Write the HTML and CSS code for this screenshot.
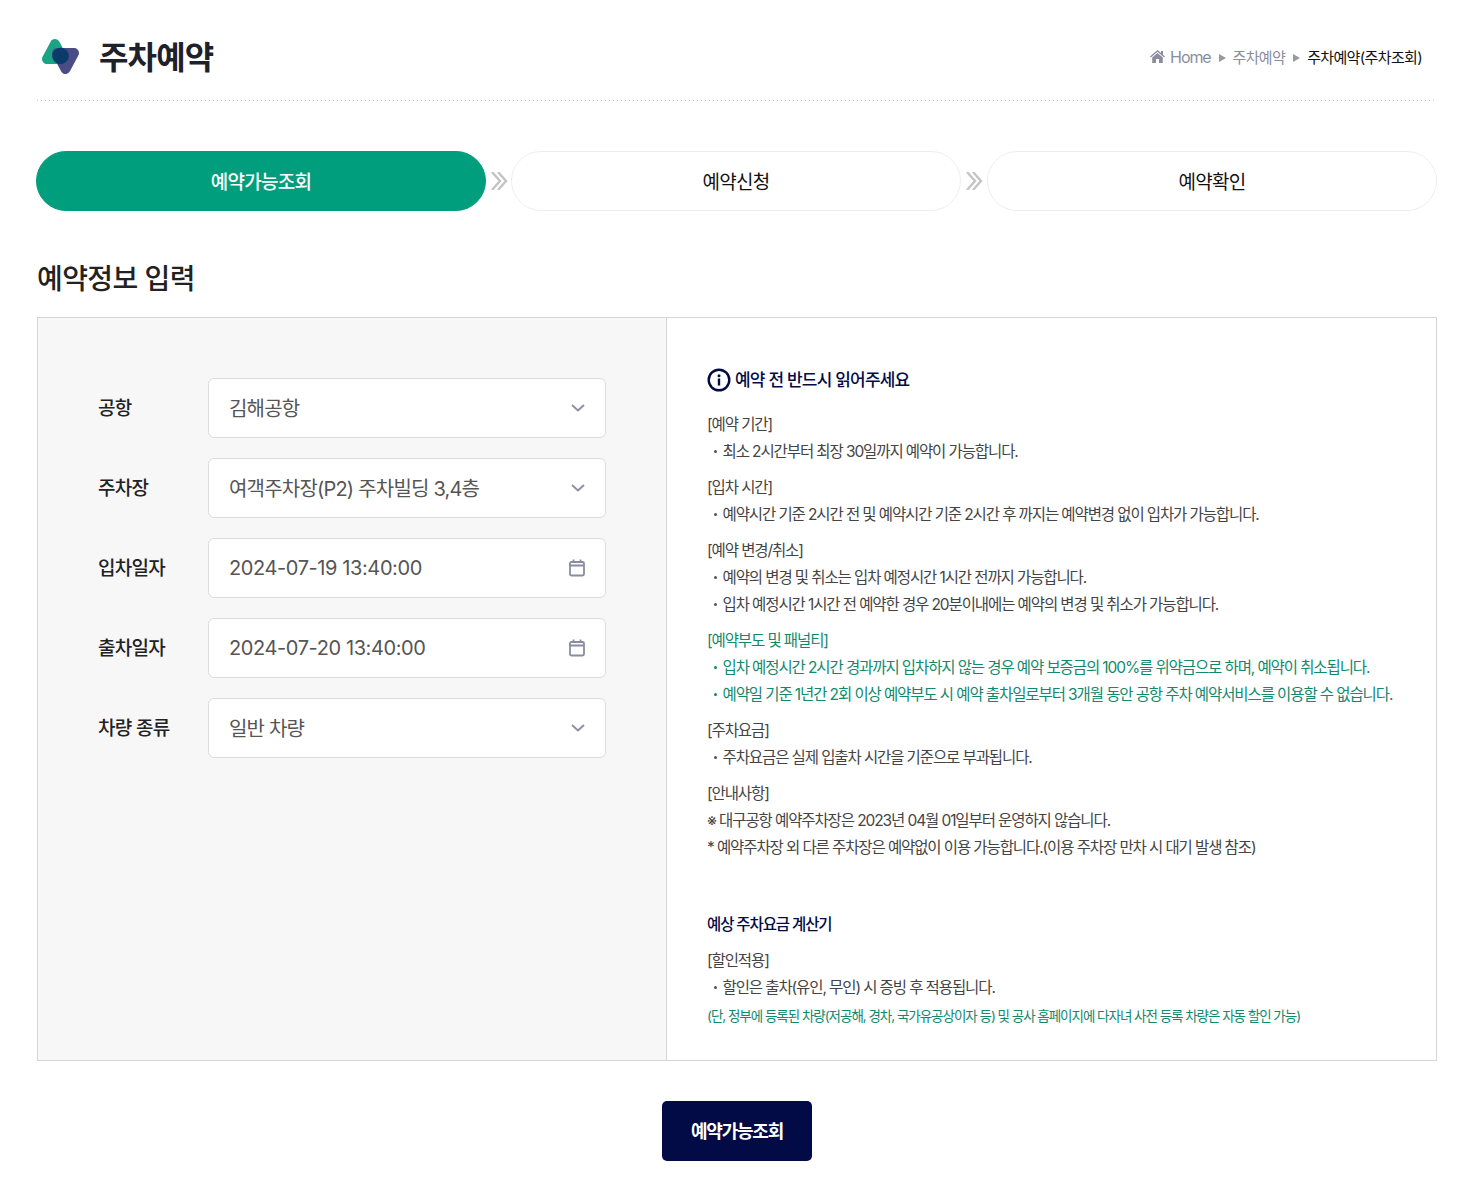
FILE: index.html
```html
<!DOCTYPE html>
<html lang="ko">
<head>
<meta charset="utf-8">
<title>주차예약</title>
<link rel="stylesheet" href="styles.css">
</head>
<body>
<div class="page">
  <header class="head">
    <div class="title-wrap">
      <svg class="logo" width="40" height="38" viewBox="0 0 40 38">
        <path d="M14 6 6 21h16z" fill="#1aa385" stroke="#1aa385" stroke-width="10" stroke-linejoin="round"/>
        <path d="M16 15h17l-8.500 16z" fill="#4b4c86" stroke="#4b4c86" stroke-width="10" stroke-linejoin="round"/>
        <circle cx="19.500" cy="18" r="8.300" fill="#0b3b6b"/>
      </svg>
      <h1>주차예약</h1>
    </div>
    <nav class="crumbs">
      <svg class="home" width="15" height="13" viewBox="0 0 15 13"><path d="M7.500 0 11 3V1h2v3.700L15 6.500l-.9 1L7.500 1.800.9 7.500l-.9-1zM2.200 7.600 7.500 3l5.300 4.600V13H9V9H6v4H2.200z" fill="#8a8d9f"/></svg>
      <span class="crumb home-text">Home</span>
      <i class="tri"></i>
      <span class="crumb">주차예약</span>
      <i class="tri"></i>
      <span class="crumb current">주차예약(주차조회)</span>
    </nav>
  </header>

  <ol class="steps">
    <li class="step active">예약가능조회</li>
    <li class="sep"><svg width="17" height="18" viewBox="0 0 17 18"><path d="M1 0l8 9-8 9M7 0l8 9-8 9" fill="none" stroke="#c4c4c4" stroke-width="2.400"/></svg></li>
    <li class="step">예약신청</li>
    <li class="sep wide"><svg width="17" height="18" viewBox="0 0 17 18"><path d="M1 0l8 9-8 9M7 0l8 9-8 9" fill="none" stroke="#c4c4c4" stroke-width="2.400"/></svg></li>
    <li class="step">예약확인</li>
  </ol>

  <h2 class="section-title">예약정보 입력</h2>

  <section class="panel">
    <form class="form">
      <div class="row"><label>공항</label><div class="field ko"><span>김해공항</span><svg class="ic" width="14" height="8" viewBox="0 0 14 8"><path d="M1 1l6 5.500L13 1" fill="none" stroke="#8a8d9f" stroke-width="1.800"/></svg></div></div>
      <div class="row"><label>주차장</label><div class="field ko"><span>여객주차장(P2) 주차빌딩 3,4층</span><svg class="ic" width="14" height="8" viewBox="0 0 14 8"><path d="M1 1l6 5.500L13 1" fill="none" stroke="#8a8d9f" stroke-width="1.800"/></svg></div></div>
      <div class="row"><label>입차일자</label><div class="field"><span>2024-07-19 13:40:00</span><svg class="cal" width="16" height="18" viewBox="0 0 16 18"><path d="M1 6.500h14M4.500 .5v3.500M11.500 .5v3.500M2.500 3h11c.8 0 1.500.7 1.500 1.500v10.500c0 .8-.7 1.500-1.500 1.500h-11c-.8 0-1.500-.7-1.500-1.500V4.500C1 3.700 1.700 3 2.500 3z" fill="none" stroke="#8a8d9f" stroke-width="1.800"/></svg></div></div>
      <div class="row"><label>출차일자</label><div class="field"><span>2024-07-20 13:40:00</span><svg class="cal" width="16" height="18" viewBox="0 0 16 18"><path d="M1 6.500h14M4.500 .5v3.500M11.500 .5v3.500M2.500 3h11c.8 0 1.500.7 1.500 1.500v10.500c0 .8-.7 1.500-1.500 1.500h-11c-.8 0-1.500-.7-1.500-1.500V4.500C1 3.700 1.700 3 2.500 3z" fill="none" stroke="#8a8d9f" stroke-width="1.800"/></svg></div></div>
      <div class="row"><label>차량 종류</label><div class="field ko"><span>일반 차량</span><svg class="ic" width="14" height="8" viewBox="0 0 14 8"><path d="M1 1l6 5.500L13 1" fill="none" stroke="#8a8d9f" stroke-width="1.800"/></svg></div></div>
    </form>

    <div class="notes">
      <h3 class="note-title"><svg width="24" height="24" viewBox="0 0 24 24"><circle cx="12" cy="12" r="10.300" fill="none" stroke="#020b45" stroke-width="2.400"/><circle cx="12" cy="7.700" r="1.500" fill="#020b45"/><rect x="10.800" y="10.500" width="2.400" height="7" fill="#020b45"/></svg>예약 전 반드시 읽어주세요</h3>
      <div class="block"><p>[예약 기간]</p><p class="li">최소 2시간부터 최장 30일까지 예약이 가능합니다.</p></div>
      <div class="block"><p>[입차 시간]</p><p class="li">예약시간 기준 2시간 전 및 예약시간 기준 2시간 후 까지는 예약변경 없이 입차가 가능합니다.</p></div>
      <div class="block"><p>[예약 변경/취소]</p><p class="li">예약의 변경 및 취소는 입차 예정시간 1시간 전까지 가능합니다.</p><p class="li">입차 예정시간 1시간 전 예약한 경우 20분이내에는 예약의 변경 및 취소가 가능합니다.</p></div>
      <div class="block green"><p>[예약부도 및 패널티]</p><p class="li">입차 예정시간 2시간 경과까지 입차하지 않는 경우 예약 보증금의 100%를 위약금으로 하며, 예약이 취소됩니다.</p><p class="li">예약일 기준 1년간 2회 이상 예약부도 시 예약 출차일로부터 3개월 동안 공항 주차 예약서비스를 이용할 수 없습니다.</p></div>
      <div class="block"><p>[주차요금]</p><p class="li">주차요금은 실제 입출차 시간을 기준으로 부과됩니다.</p></div>
      <div class="block"><p>[안내사항]</p><p>※ 대구공항 예약주차장은 2023년 04월 01일부터 운영하지 않습니다.</p><p>* 예약주차장 외 다른 주차장은 예약없이 이용 가능합니다.(이용 주차장 만차 시 대기 발생 참조)</p></div>
      <h4 class="calc-title">예상 주차요금 계산기</h4>
      <div class="block"><p>[할인적용]</p><p class="li">할인은 출차(유인, 무인) 시 증빙 후 적용됩니다.</p><p class="small">(단, 정부에 등록된 차량(저공해, 경차, 국가유공상이자 등) 및 공사 홈페이지에 다자녀 사전 등록 차량은 자동 할인 가능)</p></div>
    </div>
  </section>

  <div class="actions"><button class="submit" type="button">예약가능조회</button></div>
</div>
</body>
</html>
```
FILE: styles.css
```css
* { box-sizing: border-box; }
html, body { margin: 0; padding: 0; background: #fff; }
body { font-family: Inter, "Noto Sans CJK KR", sans-serif; color: #222; }
.page { width: 1400px; margin-left: 37px; height: 1193px; }
h1, h2, h3, h4, p, ol { margin: 0; padding: 0; }

.head { height: 101px; display: flex; justify-content: space-between; align-items: center; padding: 12px 15px 0 4px; background: repeating-linear-gradient(90deg, #c4c4c4 0 1px, transparent 1px 4px) left bottom / 100% 1px no-repeat; }
.title-wrap { display: flex; align-items: center; gap: 18px; }
.logo { display: block; }
h1 { font-size: 32px; font-weight: 700; letter-spacing: -.85px; color: #1d2129; line-height: 40px; margin-top: 2px; }
.crumbs { display: flex; align-items: center; font-size: 15px; letter-spacing: -.65px; color: #8a8d9f; }
.home { margin-right: 5px; }
.home-text { font-size: 16px; letter-spacing: -1.100px; }
.tri { width: 0; height: 0; border-left: 7px solid #999; border-top: 4px solid transparent; border-bottom: 4px solid transparent; margin: 2px 7px 0 8px; }
.current { color: #111; }

.steps { list-style: none; display: flex; align-items: center; width: 1401px; margin: 50px 0 0 -1px; }
.step { width: 450px; height: 60px; flex: none; border: 1px solid #eee; border-radius: 30px; padding-bottom: 2px; display: flex; align-items: center; justify-content: center; font-size: 19px; font-weight: 400; letter-spacing: -.75px; color: #111; }
.step.active { background: #009e7c; border-color: #009e7c; color: #fff; font-weight: 500; }
.sep { width: 25px; flex: none; display: flex; justify-content: center; }
.sep.wide { width: 26px; }
.sep svg { display: block; margin-left: 1px; }

.section-title { font-size: 28px; font-weight: 500; letter-spacing: -.6px; line-height: 40px; margin-top: 48px; color: #222; }

.panel { display: flex; width: 1400px; height: 744px; margin-top: 18px; border: 1px solid #d5d5d5; }
.form { width: 629px; flex: none; background: #f7f7f7; border-right: 1px solid #d5d5d5; padding: 60px 60px 0; display: flex; flex-direction: column; gap: 20px; }
.row { display: flex; align-items: center; height: 60px; }
.row label { width: 110px; flex: none; font-size: 19px; font-weight: 500; letter-spacing: -.7px; color: #222; padding-bottom: 4px; }
.field { width: 398px; height: 60px; flex: none; background: #fff; border: 1px solid #ddd; border-radius: 6px; padding: 0 20px; display: flex; align-items: center; justify-content: space-between; font-size: 20px; letter-spacing: -.4px; color: #555; }
.field.ko { letter-spacing: -.8px; }
.field.ko span { padding-bottom: 2px; }

.notes { flex: 1; padding: 47px 30px 0 40px; font-size: 15.500px; line-height: 27px; letter-spacing: -1.100px; color: #444; white-space: nowrap; }
.note-title { display: flex; align-items: center; gap: 4px; font-size: 17px; font-weight: 500; color: #020b45; letter-spacing: -.8px; line-height: 30px; margin-bottom: 16px; }
.block { margin-bottom: 9px; }
.li { position: relative; padding-left: 15.500px; }
.li::before { content: ""; position: absolute; left: 7px; top: 12px; width: 3px; height: 3px; border-radius: 50%; background: #555; }
.green .li::before { background: #11896d; }
.green, .small { color: #11896d; }
.calc-title { font-size: 15.500px; font-weight: 500; color: #020b45; letter-spacing: -1.100px; line-height: 27px; margin-top: 50px; margin-bottom: 9px; }
.small { font-size: 13.500px; letter-spacing: -1.020px; line-height: 30px; }

.actions { display: flex; justify-content: center; margin-top: 40px; }
.submit { width: 150px; height: 60px; padding: 0 0 3px; background: #020b45; color: #fff; border: 0; border-radius: 5px; font-family: inherit; font-size: 18px; font-weight: 700; letter-spacing: -1.200px; }
```
